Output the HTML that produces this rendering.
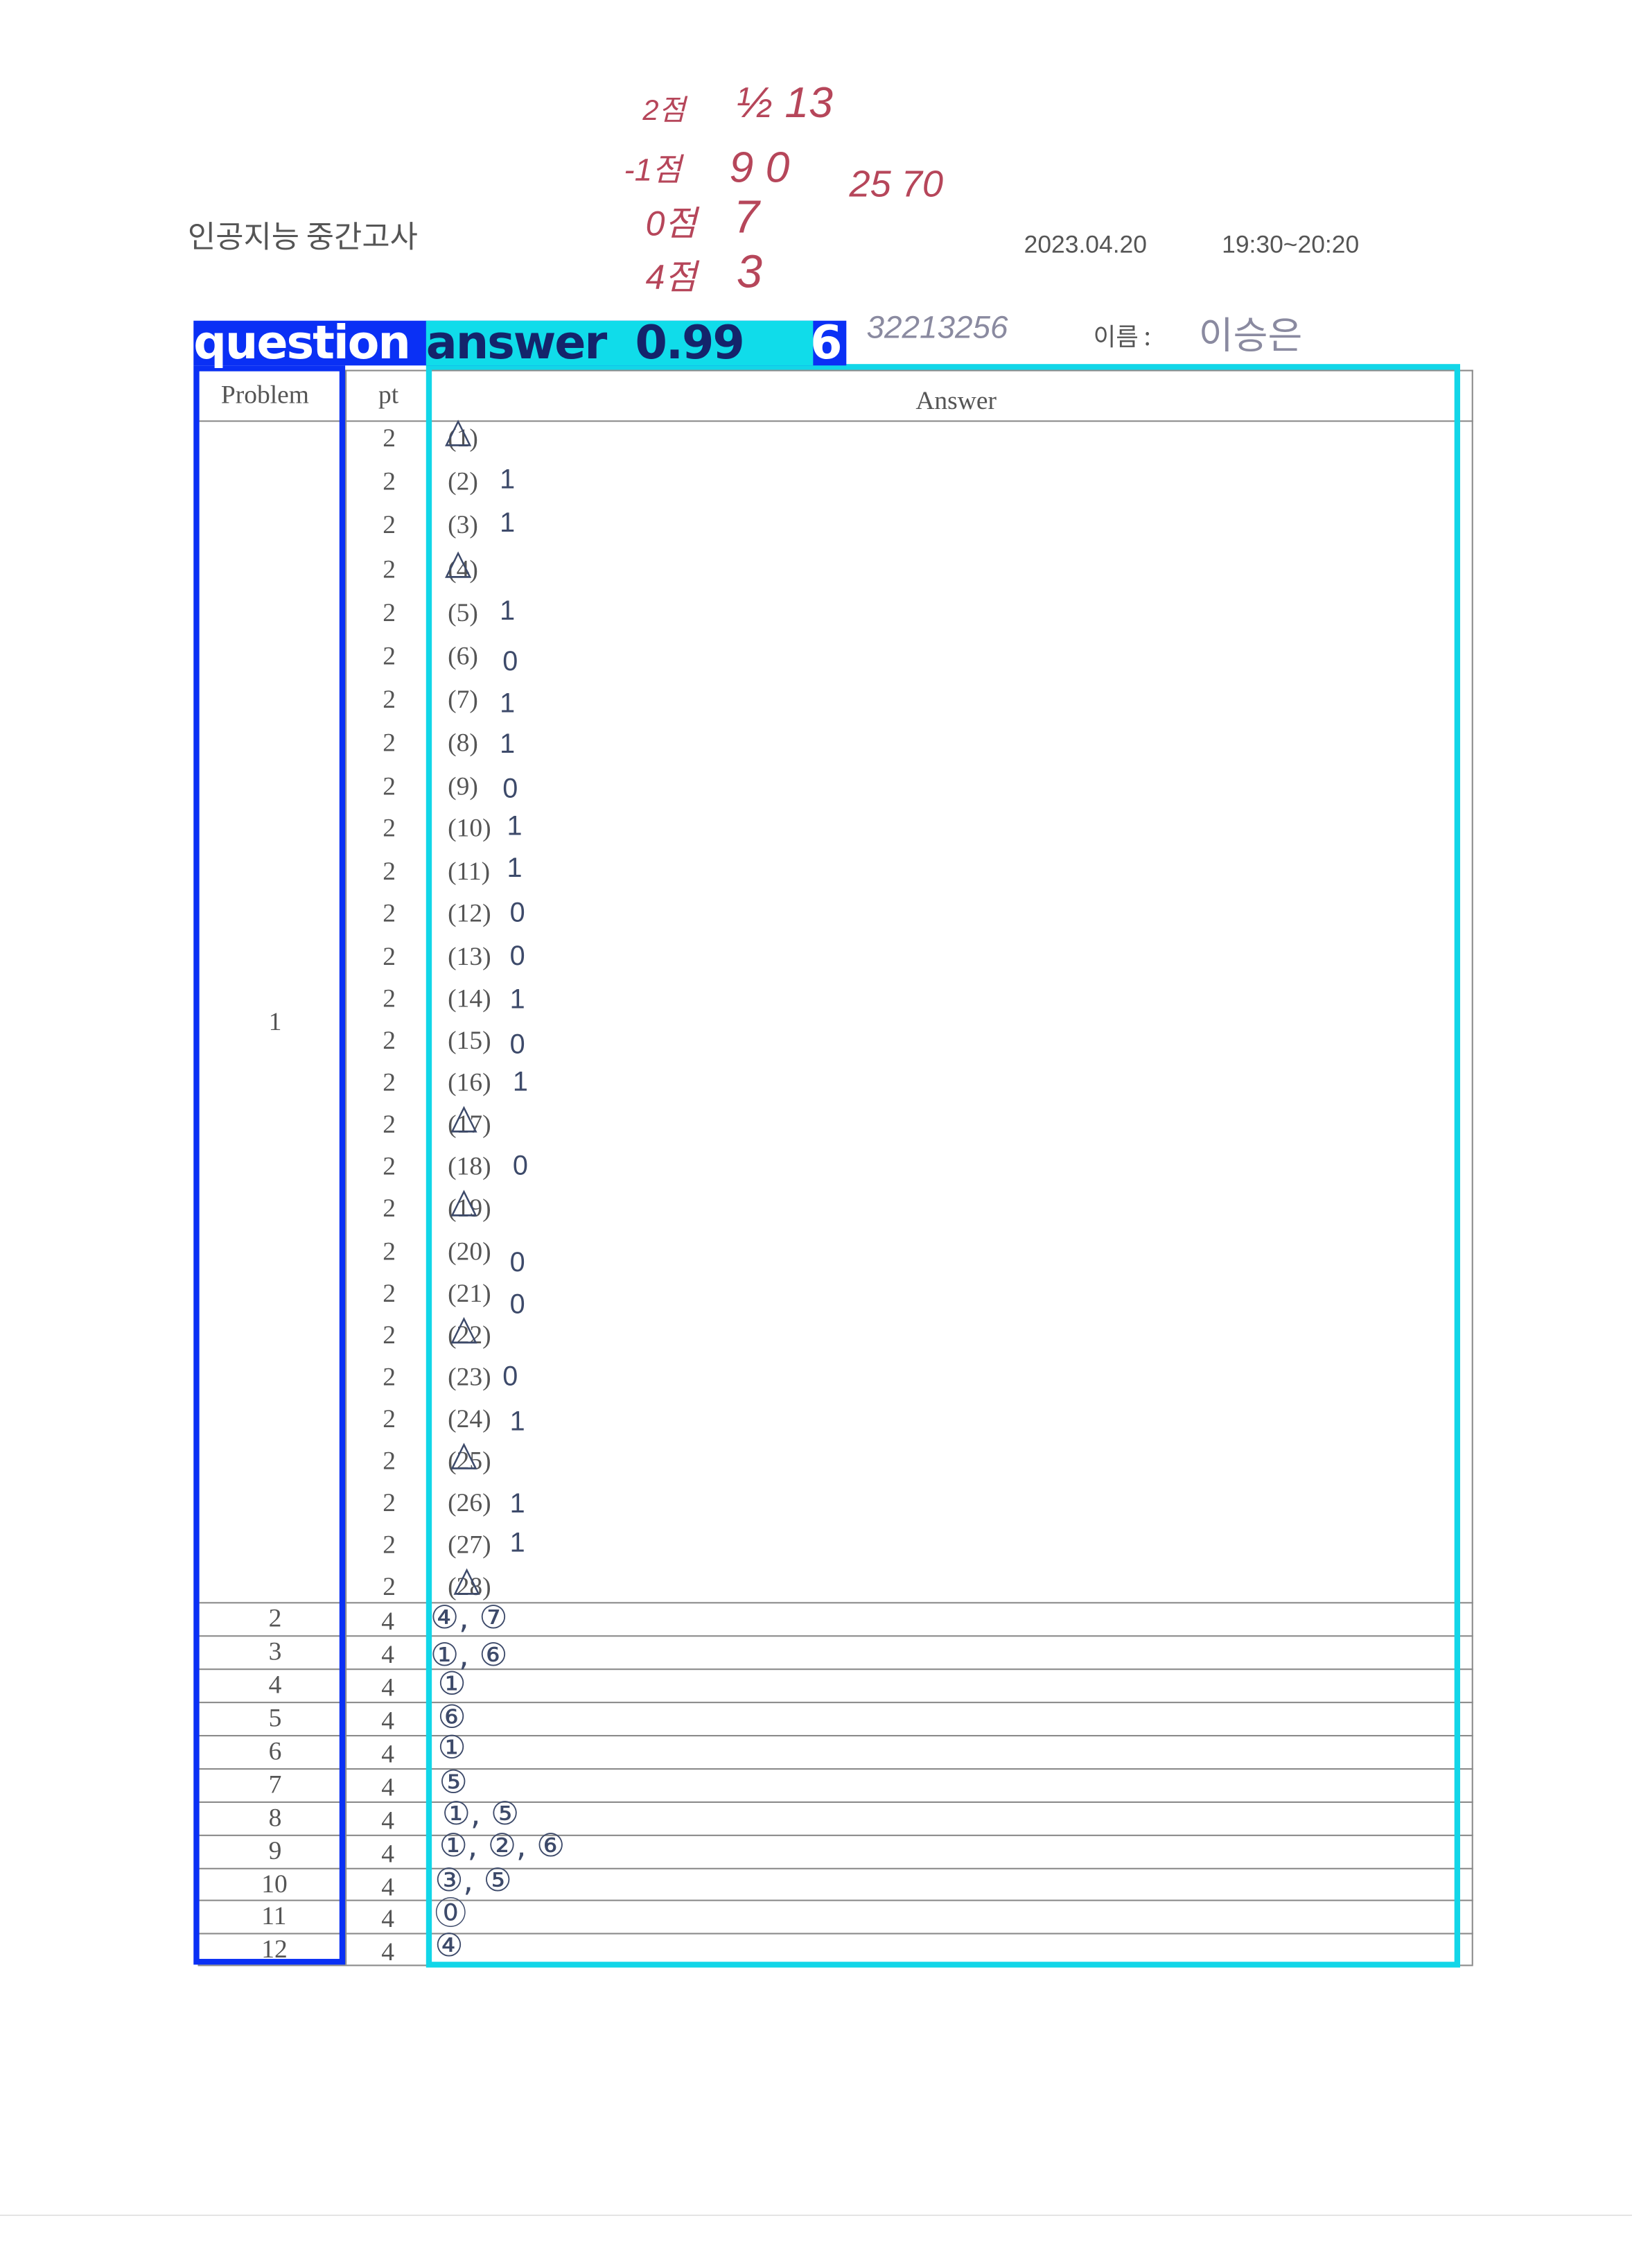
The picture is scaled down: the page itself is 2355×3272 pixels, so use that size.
<!DOCTYPE html>
<html><head><meta charset="utf-8"><style>
html,body{margin:0;padding:0;background:#fff;}
body{width:2355px;height:3272px;overflow:hidden;position:relative;}
#s{position:absolute;left:0;top:0;width:1130px;height:1570px;transform:scale(2.0841);transform-origin:0 0;font-family:"Liberation Serif","Noto Serif CJK SC",serif;color:#555;}
.a{position:absolute;white-space:nowrap;}
.p{font-size:18px;line-height:17px;}
.h{font-family:"Liberation Sans","Noto Sans CJK KR",sans-serif;color:#3d4a6a;font-size:19px;}
.t{font-family:"DejaVu Sans",sans-serif;color:#3d4a6a;font-size:24px;}
.c{font-family:"DejaVu Sans",sans-serif;color:#3d4a6a;font-size:22px;line-height:22px;}
.r{font-family:"Liberation Sans","Noto Sans CJK KR",sans-serif;color:#b6465a;font-size:24px;font-style:italic;}
.hl{position:absolute;height:1px;background:#8a8a8a;}
.vl{position:absolute;width:1px;background:#8a8a8a;}
</style></head><body><div id="s">
<div class="a" style="left:130px;top:148px;font-size:21px;font-family:'Noto Sans CJK KR',sans-serif;color:#555;">인공지능 중간고사</div>
<div class="a" style="left:709px;top:160px;font-size:17px;font-family:'Liberation Sans',sans-serif;color:#555;">2023.04.20</div>
<div class="a" style="left:846px;top:160px;font-size:17px;font-family:'Liberation Sans',sans-serif;color:#555;">19:30~20:20</div>
<div class="a" style="left:757px;top:219px;font-size:17px;font-family:'Noto Sans CJK KR',sans-serif;color:#555;">이름 :</div>
<div class="a h" style="left:600px;top:214px;font-size:22px;font-style:italic;color:#8a8aa0;">32213256</div>
<div class="a h" style="left:830px;top:212px;font-size:26px;color:#8a8aa0;">이승은</div>
<div class="a r" style="left:445px;top:60px;font-size:20px;">2점</div>
<div class="a r" style="left:510px;top:55px;font-size:30px;">½ 13</div>
<div class="a r" style="left:432px;top:100px;font-size:22px;">-1점</div>
<div class="a r" style="left:505px;top:100px;font-size:30px;">9 0</div>
<div class="a r" style="left:447px;top:135px;font-size:24px;">0점</div>
<div class="a r" style="left:508px;top:132px;font-size:32px;">7</div>
<div class="a r" style="left:447px;top:172px;font-size:24px;">4점</div>
<div class="a r" style="left:510px;top:170px;font-size:32px;">3</div>
<div class="a r" style="left:588px;top:112px;font-size:26px;">25 70</div>
<div class="hl" style="left:137px;top:256px;width:883px;"></div>
<div class="hl" style="left:137px;top:291px;width:883px;"></div>
<div class="vl" style="left:137px;top:256px;height:1104px;"></div>
<div class="vl" style="left:239px;top:256px;height:1104px;"></div>
<div class="vl" style="left:296px;top:256px;height:1104px;"></div>
<div class="vl" style="left:1019px;top:256px;height:1104px;"></div>
<div class="hl" style="left:137px;top:1109px;width:883px;"></div>
<div class="hl" style="left:137px;top:1132px;width:883px;"></div>
<div class="hl" style="left:137px;top:1155px;width:883px;"></div>
<div class="hl" style="left:137px;top:1178px;width:883px;"></div>
<div class="hl" style="left:137px;top:1201px;width:883px;"></div>
<div class="hl" style="left:137px;top:1224px;width:883px;"></div>
<div class="hl" style="left:137px;top:1247px;width:883px;"></div>
<div class="hl" style="left:137px;top:1270px;width:883px;"></div>
<div class="hl" style="left:137px;top:1293px;width:883px;"></div>
<div class="hl" style="left:137px;top:1315px;width:883px;"></div>
<div class="hl" style="left:137px;top:1338px;width:883px;"></div>
<div class="hl" style="left:137px;top:1360px;width:883px;"></div>
<div class="a p" style="left:153px;top:265px;">Problem</div>
<div class="a p" style="left:262px;top:265px;">pt</div>
<div class="a p" style="left:634px;top:269px;">Answer</div>
<div class="a p" style="left:186px;top:699px;">1</div>
<div class="a p" style="left:265px;top:295px;">2</div><div class="a p" style="left:310px;top:295px;">(1)</div><div class="a t" style="left:308px;top:284px;">△</div>
<div class="a p" style="left:265px;top:325px;">2</div><div class="a p" style="left:310px;top:325px;">(2)</div><div class="a h" style="left:346px;top:322px;">1</div>
<div class="a p" style="left:265px;top:355px;">2</div><div class="a p" style="left:310px;top:355px;">(3)</div><div class="a h" style="left:346px;top:352px;">1</div>
<div class="a p" style="left:265px;top:386px;">2</div><div class="a p" style="left:310px;top:386px;">(4)</div><div class="a t" style="left:308px;top:375px;">△</div>
<div class="a p" style="left:265px;top:416px;">2</div><div class="a p" style="left:310px;top:416px;">(5)</div><div class="a h" style="left:346px;top:413px;">1</div>
<div class="a p" style="left:265px;top:446px;">2</div><div class="a p" style="left:310px;top:446px;">(6)</div><div class="a h" style="left:348px;top:448px;">0</div>
<div class="a p" style="left:265px;top:476px;">2</div><div class="a p" style="left:310px;top:476px;">(7)</div><div class="a h" style="left:346px;top:477px;">1</div>
<div class="a p" style="left:265px;top:506px;">2</div><div class="a p" style="left:310px;top:506px;">(8)</div><div class="a h" style="left:346px;top:505px;">1</div>
<div class="a p" style="left:265px;top:536px;">2</div><div class="a p" style="left:310px;top:536px;">(9)</div><div class="a h" style="left:348px;top:536px;">0</div>
<div class="a p" style="left:265px;top:565px;">2</div><div class="a p" style="left:310px;top:565px;">(10)</div><div class="a h" style="left:351px;top:562px;">1</div>
<div class="a p" style="left:265px;top:595px;">2</div><div class="a p" style="left:310px;top:595px;">(11)</div><div class="a h" style="left:351px;top:591px;">1</div>
<div class="a p" style="left:265px;top:624px;">2</div><div class="a p" style="left:310px;top:624px;">(12)</div><div class="a h" style="left:353px;top:622px;">0</div>
<div class="a p" style="left:265px;top:654px;">2</div><div class="a p" style="left:310px;top:654px;">(13)</div><div class="a h" style="left:353px;top:652px;">0</div>
<div class="a p" style="left:265px;top:683px;">2</div><div class="a p" style="left:310px;top:683px;">(14)</div><div class="a h" style="left:353px;top:682px;">1</div>
<div class="a p" style="left:265px;top:712px;">2</div><div class="a p" style="left:310px;top:712px;">(15)</div><div class="a h" style="left:353px;top:713px;">0</div>
<div class="a p" style="left:265px;top:741px;">2</div><div class="a p" style="left:310px;top:741px;">(16)</div><div class="a h" style="left:355px;top:739px;">1</div>
<div class="a p" style="left:265px;top:770px;">2</div><div class="a p" style="left:310px;top:770px;">(17)</div><div class="a t" style="left:312px;top:759px;">△</div>
<div class="a p" style="left:265px;top:799px;">2</div><div class="a p" style="left:310px;top:799px;">(18)</div><div class="a h" style="left:355px;top:797px;">0</div>
<div class="a p" style="left:265px;top:828px;">2</div><div class="a p" style="left:310px;top:828px;">(19)</div><div class="a t" style="left:312px;top:817px;">△</div>
<div class="a p" style="left:265px;top:858px;">2</div><div class="a p" style="left:310px;top:858px;">(20)</div><div class="a h" style="left:353px;top:864px;">0</div>
<div class="a p" style="left:265px;top:887px;">2</div><div class="a p" style="left:310px;top:887px;">(21)</div><div class="a h" style="left:353px;top:893px;">0</div>
<div class="a p" style="left:265px;top:916px;">2</div><div class="a p" style="left:310px;top:916px;">(22)</div><div class="a t" style="left:312px;top:905px;">△</div>
<div class="a p" style="left:265px;top:945px;">2</div><div class="a p" style="left:310px;top:945px;">(23)</div><div class="a h" style="left:348px;top:943px;">0</div>
<div class="a p" style="left:265px;top:974px;">2</div><div class="a p" style="left:310px;top:974px;">(24)</div><div class="a h" style="left:353px;top:974px;">1</div>
<div class="a p" style="left:265px;top:1003px;">2</div><div class="a p" style="left:310px;top:1003px;">(25)</div><div class="a t" style="left:312px;top:992px;">△</div>
<div class="a p" style="left:265px;top:1032px;">2</div><div class="a p" style="left:310px;top:1032px;">(26)</div><div class="a h" style="left:353px;top:1031px;">1</div>
<div class="a p" style="left:265px;top:1061px;">2</div><div class="a p" style="left:310px;top:1061px;">(27)</div><div class="a h" style="left:353px;top:1058px;">1</div>
<div class="a p" style="left:265px;top:1090px;">2</div><div class="a p" style="left:310px;top:1090px;">(28)</div><div class="a t" style="left:314px;top:1079px;">△</div>
<div class="a p" style="left:186px;top:1112px;">2</div><div class="a p" style="left:264px;top:1114px;">4</div><div class="a c" style="left:298px;top:1110px;">④, ⑦</div>
<div class="a p" style="left:186px;top:1135px;">3</div><div class="a p" style="left:264px;top:1137px;">4</div><div class="a c" style="left:298px;top:1136px;">①, ⑥</div>
<div class="a p" style="left:186px;top:1158px;">4</div><div class="a p" style="left:264px;top:1160px;">4</div><div class="a c" style="left:303px;top:1156px;">①</div>
<div class="a p" style="left:186px;top:1181px;">5</div><div class="a p" style="left:264px;top:1183px;">4</div><div class="a c" style="left:303px;top:1179px;">⑥</div>
<div class="a p" style="left:186px;top:1204px;">6</div><div class="a p" style="left:264px;top:1206px;">4</div><div class="a c" style="left:303px;top:1200px;">①</div>
<div class="a p" style="left:186px;top:1227px;">7</div><div class="a p" style="left:264px;top:1229px;">4</div><div class="a c" style="left:304px;top:1224px;">⑤</div>
<div class="a p" style="left:186px;top:1250px;">8</div><div class="a p" style="left:264px;top:1252px;">4</div><div class="a c" style="left:306px;top:1246px;">①, ⑤</div>
<div class="a p" style="left:186px;top:1273px;">9</div><div class="a p" style="left:264px;top:1275px;">4</div><div class="a c" style="left:304px;top:1268px;">①, ②, ⑥</div>
<div class="a p" style="left:181px;top:1296px;">10</div><div class="a p" style="left:264px;top:1298px;">4</div><div class="a c" style="left:301px;top:1292px;">③, ⑤</div>
<div class="a p" style="left:181px;top:1318px;">11</div><div class="a p" style="left:264px;top:1320px;">4</div><div class="a c" style="left:301px;top:1315px;">⓪</div>
<div class="a p" style="left:181px;top:1341px;">12</div><div class="a p" style="left:264px;top:1343px;">4</div><div class="a c" style="left:301px;top:1337px;">④</div>
<div class="a" style="left:134px;top:253px;width:97px;height:1099px;border:4px solid #0a30f5;"></div>
<div class="a" style="left:295px;top:252px;width:708px;height:1102px;border:4px solid #12d6e8;"></div>
<div class="a" style="left:134px;top:222px;width:452px;height:31px;background:#0a30f5;"></div>
<div class="a" style="left:134px;top:218px;font-family:'DejaVu Sans',sans-serif;font-weight:bold;font-size:32px;color:#fff;line-height:38px;letter-spacing:-1px;">question</div>
<div class="a" style="left:561px;top:218px;font-family:'DejaVu Sans',sans-serif;font-weight:bold;font-size:32px;color:#fff;line-height:38px;">6</div>
<div class="a" style="left:295px;top:222px;width:268px;height:31px;background:#10dcea;overflow:hidden;"><div style="font-family:'DejaVu Sans',sans-serif;font-weight:bold;font-size:32px;color:#14246b;line-height:38px;margin-top:-4px;letter-spacing:-1px;">answer &nbsp;0.99</div></div>
<div class="hl" style="left:0;top:1533px;width:1130px;background:#e4e4e4;"></div>
</div></body></html>
